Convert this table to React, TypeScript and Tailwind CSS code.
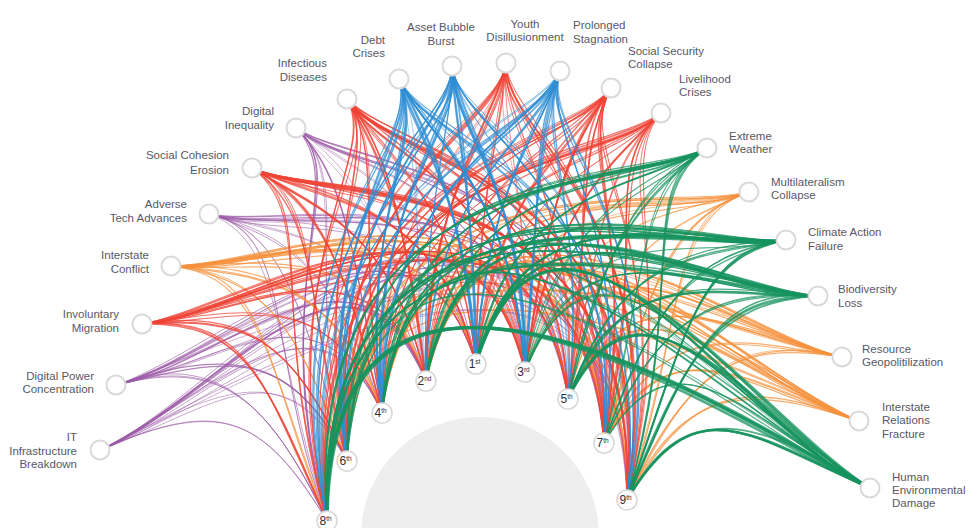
type Cat = 'blue' | 'red' | 'purple' | 'orange' | 'green';

const COLORS: Record<Cat, string> = {
  blue: '#2f8ed3',
  red: '#ef4437',
  purple: '#9b5aa6',
  orange: '#f5923e',
  green: '#17935f',
};

// rank weights per category (1st..9th)
const BOOST: Record<Cat, number[]> = {
  green: [7.0, 4.8, 3.2, 4.2, 7.0, 4.2, 3.2, 9.2, 6.2],
  blue: [6.2, 3.2, 6.2, 5.0, 3.2, 5.0, 6.0, 3.2, 2.5],
  red: [3.2, 5.0, 4.2, 3.2, 3.2, 3.2, 4.0, 3.2, 4.2],
  orange: [2.2, 3.5, 2.5, 2.6, 2.6, 2.6, 3.2, 2.6, 3.2],
  purple: [1.7, 2.5, 1.7, 2.5, 1.7, 2.5, 1.7, 2.7, 1.7],
};

const ORDER: Cat[] = ['purple', 'orange', 'red', 'blue', 'green'];

type Outer = {
  name: string[];
  x: number;
  y: number;
  cat: Cat;
  anchor: 'start' | 'middle' | 'end';
  lx: number;
  ly: number[];
};

const outer: Outer[] = [
  { name: ['Debt', 'Crises'], x: 399, y: 79, cat: 'blue', anchor: 'end', lx: 385, ly: [40, 53] },
  { name: ['Asset Bubble', 'Burst'], x: 452, y: 66, cat: 'blue', anchor: 'middle', lx: 441, ly: [27, 41] },
  { name: ['Infectious', 'Diseases'], x: 347, y: 99, cat: 'red', anchor: 'end', lx: 327, ly: [63, 77] },
  { name: ['Digital', 'Inequality'], x: 296, y: 128, cat: 'purple', anchor: 'end', lx: 274, ly: [111, 125] },
  { name: ['Social Cohesion', 'Erosion'], x: 252, y: 168, cat: 'red', anchor: 'end', lx: 229, ly: [155, 170] },
  { name: ['Adverse', 'Tech Advances'], x: 209, y: 214, cat: 'purple', anchor: 'end', lx: 187, ly: [204, 218] },
  { name: ['Interstate', 'Conflict'], x: 171, y: 266, cat: 'orange', anchor: 'end', lx: 149, ly: [255, 269] },
  { name: ['Involuntary', 'Migration'], x: 142, y: 324, cat: 'red', anchor: 'end', lx: 119, ly: [314, 328] },
  { name: ['Digital Power', 'Concentration'], x: 116, y: 385, cat: 'purple', anchor: 'end', lx: 94, ly: [376, 389] },
  { name: ['IT', 'Infrastructure', 'Breakdown'], x: 100, y: 450, cat: 'purple', anchor: 'end', lx: 77, ly: [437, 451, 464] },
  { name: ['Youth', 'Disillusionment'], x: 506, y: 63, cat: 'red', anchor: 'middle', lx: 525, ly: [24, 37] },
  { name: ['Prolonged', 'Stagnation'], x: 560, y: 71, cat: 'blue', anchor: 'start', lx: 573, ly: [25, 39] },
  { name: ['Social Security', 'Collapse'], x: 611, y: 88, cat: 'red', anchor: 'start', lx: 628, ly: [51, 64] },
  { name: ['Livelihood', 'Crises'], x: 661, y: 113, cat: 'red', anchor: 'start', lx: 679, ly: [79, 92] },
  { name: ['Extreme', 'Weather'], x: 707, y: 148, cat: 'green', anchor: 'start', lx: 729, ly: [136, 149] },
  { name: ['Multilateralism', 'Collapse'], x: 749, y: 192, cat: 'orange', anchor: 'start', lx: 771, ly: [182, 195] },
  { name: ['Climate Action', 'Failure'], x: 786, y: 240, cat: 'green', anchor: 'start', lx: 808, ly: [232, 246] },
  { name: ['Biodiversity', 'Loss'], x: 818, y: 296, cat: 'green', anchor: 'start', lx: 838, ly: [289, 303] },
  { name: ['Resource', 'Geopolitilization'], x: 842, y: 357, cat: 'orange', anchor: 'start', lx: 862, ly: [349, 362] },
  { name: ['Interstate', 'Relations', 'Fracture'], x: 859, y: 421, cat: 'orange', anchor: 'start', lx: 882, ly: [407, 420, 434] },
  { name: ['Human', 'Environmental', 'Damage'], x: 870, y: 488, cat: 'green', anchor: 'start', lx: 892, ly: [477, 490, 503] },
];

const inner = [
  { n: '1', s: 'st', x: 476, y: 364 },
  { n: '2', s: 'nd', x: 426, y: 381 },
  { n: '3', s: 'rd', x: 525, y: 372 },
  { n: '4', s: 'th', x: 382, y: 413 },
  { n: '5', s: 'th', x: 568, y: 399 },
  { n: '6', s: 'th', x: 347, y: 461 },
  { n: '7', s: 'th', x: 604, y: 443 },
  { n: '8', s: 'th', x: 327, y: 521 },
  { n: '9', s: 'th', x: 627, y: 500 },
];

function rng(seed: number) {
  let a = seed;
  return () => {
    a |= 0;
    a = (a + 0x6d2b79f5) | 0;
    let t = Math.imul(a ^ (a >>> 15), 1 | a);
    t = (t + Math.imul(t ^ (t >>> 7), 61 | t)) ^ t;
    return ((t ^ (t >>> 14)) >>> 0) / 4294967296;
  };
}

const norm = (x: number, y: number) => {
  const l = Math.hypot(x, y) || 1;
  return [x / l, y / l];
};

function linkPath(o: Outer, i: { x: number; y: number }, jx: number, jy: number) {
  const d = Math.hypot(o.x - i.x, o.y - i.y);
  // leave the outer node heading inwards
  const c1x = o.x + (480 - o.x) * 0.3 + jx;
  const c1y = o.y + (290 - o.y) * 0.3 + jy;
  // arrive at the rank node from above, leaning a little towards the source
  const [rx, ry] = norm(i.x - 480, i.y - 1000);
  const [ox, oy] = norm(o.x - i.x, o.y - i.y);
  let [dx, dy] = norm(rx + ox * 0.3, ry + oy * 0.3);
  if (dy > -0.7) [dx, dy] = norm(dx, -1);
  const k = 0.4 + Math.min(0.3, d / 1800);
  const c2x = i.x + dx * d * k - jx * 0.6;
  const c2y = i.y + dy * d * k - jy * 0.6;
  return `M${o.x},${o.y} C${c1x.toFixed(1)},${c1y.toFixed(1)} ${c2x.toFixed(1)},${c2y.toFixed(1)} ${i.x},${i.y}`;
}

const rand = rng(20240117);
const links = outer.flatMap((o, oi) =>
  inner.flatMap((inn, ii) => {
    const w = Math.max(1.2, BOOST[o.cat][ii] * (0.3 + rand() * 0.9));
    const strands = w > 4 ? 4 : w > 2.4 ? 3 : 2;
    return Array.from({ length: strands }, (_, s) => {
      const jx = (rand() - 0.5) * 18;
      const jy = (rand() - 0.5) * 18;
      return {
        key: `${oi}-${ii}-${s}`,
        d: linkPath(o, inn, jx, jy),
        w: Math.max(0.6, (w / strands) * (0.85 + rand() * 0.5)),
        cat: o.cat,
      };
    });
  })
);
const ordered = ORDER.flatMap((c) => links.filter((l) => l.cat === c));

export default function App() {
  return (
    <div className="w-[980px] h-[528px] bg-white overflow-hidden">
      <svg
        width={980}
        height={528}
        viewBox="0 0 980 528"
        className="block font-['Liberation_Sans',Arial,sans-serif]"
      >
        <circle cx={480} cy={536} r={119} fill="#eeeeee" />

        <g fill="none" strokeOpacity={0.75}>
          {ordered.map((l) => (
            <path key={l.key} d={l.d} stroke={COLORS[l.cat]} strokeWidth={l.w} />
          ))}
        </g>

        {outer.map((o) => (
          <g key={o.name.join(' ')}>
            <circle cx={o.x} cy={o.y} r={9.5} fill="#ffffff" stroke="#d9d9d9" strokeWidth={2} />
            <text textAnchor={o.anchor} fontSize={11.5} fill="#585866">
              {o.name.map((line, k) => (
                <tspan key={k} x={o.lx} y={o.ly[k] + 4}>
                  {line}
                </tspan>
              ))}
            </text>
          </g>
        ))}

        {inner.map((r) => (
          <g key={r.n}>
            <circle cx={r.x} cy={r.y} r={10} fill="#ffffff" stroke="#d9d9d9" strokeWidth={1.6} />
            <text x={r.x - 1.5} y={r.y + 4} textAnchor="middle" fill="#2e2e2e" fontSize={12}>
              {r.n}
              <tspan fontSize={6.5} dy={-4.5}>
                {r.s}
              </tspan>
            </text>
          </g>
        ))}
      </svg>
    </div>
  );
}
